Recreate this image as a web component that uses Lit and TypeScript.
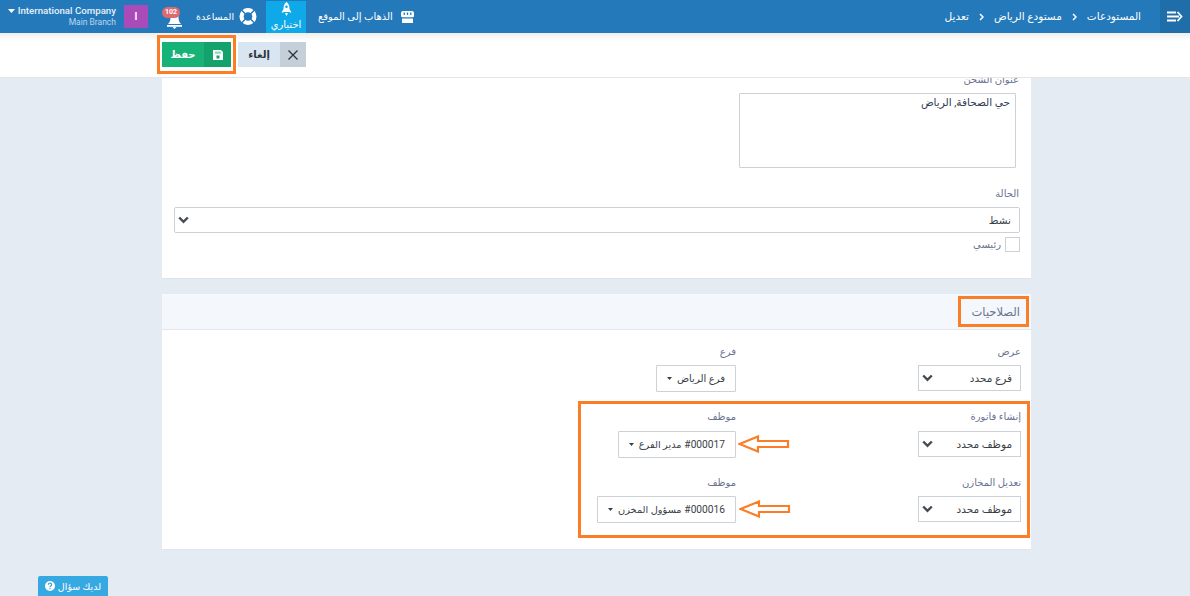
import { LitElement, html, css, svg } from "lit";
import { customElement } from "lit/decorators.js";

const caret = html`<svg class="caret" width="7" height="4" viewBox="0 0 7 4"><path d="M0 0h7L3.5 4z" fill="currentColor"/></svg>`;
const smallCaret = html`<svg class="caret" width="5" height="3" viewBox="0 0 5 3"><path d="M0 0h5L2.500 3z" fill="currentColor"/></svg>`;
const chevron = html`<svg class="chev" width="11" height="8" viewBox="0 0 11 8"><path d="M1.2 1.5 5.5 5.8 9.8 1.5" fill="none" stroke="#444b55" stroke-width="2.4"/></svg>`;
const crumbSep = html`<svg width="5" height="8" viewBox="0 0 5 8"><path d="M1 1l3 3-3 3" fill="none" stroke="#fff" stroke-width="1.5"/></svg>`;
const arrow = svg`<path d="M1.5 9 20 1.5V6H50v6H20v4.500z" fill="#fff" stroke="#fb7d25" stroke-width="2.200"/>`;

function select(text: string) {
  return html`<div class="sel"><span>${text}</span>${chevron}</div>`;
}
function drop(code: string, name: string) {
  return html`<div class="drop"><span>${code ? html`<span class="code">${code}</span> ` : ""}<span class="nm">${name}</span></span>${smallCaret}</div>`;
}

@customElement("app-root")
export class AppRoot extends LitElement {
  static styles = css`
    :host {
      display: block;
      position: relative;
      height: 596px;
      overflow: hidden;
      background: #e4ebf3;
      font-family: Roboto, "DejaVu Sans", sans-serif;
      font-size: 11px;
      color: #3a3f47;
    }
    .top {
      height: 33px;
      background: #2479bb;
      color: #fff;
      display: flex;
      justify-content: space-between;
      align-items: stretch;
      position: relative;
      z-index: 3;
    }
    .top-left { display: flex; align-items: center; padding-left: 8px; }
    .company { display: flex; gap: 2px; align-items: flex-start; width: 108px; }
    .company .caret { margin-top: 4px; color: #fff; flex: none; }
    .co-text { display: flex; flex-direction: column; align-items: flex-end; flex: 1; }
    .co-name { font-size: 9.700px; font-weight: 500; line-height: 12px; white-space: nowrap; color: #e8f1f8; }
    .co-sub { font-size: 8.500px; line-height: 11px; color: #bcd6ea; white-space: nowrap; }
    .avatar {
      width: 24px; height: 23px; margin-left: 8px; background: #a94bb8; border-radius: 1px;
      display: flex; align-items: center; justify-content: center; font-size: 10px; font-weight: 700;
    }
    .bell { position: relative; width: 20px; height: 24px; margin-left: 14px; }
    .bell svg { position: absolute; left: 5px; top: 6px; }
    .badge {
      position: absolute; left: 0; top: 2px; width: 18px; height: 11px; border-radius: 6px;
      background: #dc6a70; font-size: 7px; line-height: 11px; font-weight: 700; text-align: center;
    }
    .help { display: flex; align-items: center; gap: 5px; margin-left: 14px; font-size: 9.500px; width: 61px; justify-content: flex-end; }
    .active {
      width: 40px; height: 32px; margin-left: 9px; background: #0fa8e8;
      display: flex; flex-direction: column; align-items: center; font-size: 10px; line-height: 13px;
    }
    .active svg { margin-top: 1px; margin-bottom: 2px; }
    .goto { display: flex; align-items: center; gap: 8px; margin-left: 12px; font-size: 10px; }
    .top-right { display: flex; align-items: center; }
    .crumbs { display: flex; direction: rtl; align-items: center; gap: 10px; margin-right: 19px; font-size: 10.500px; }
    .toggle { width: 30px; height: 33px; background: #1f6da9; display: flex; align-items: center; justify-content: center; }

    .toolbar {
      height: 45px;
      background: linear-gradient(#eeeeee, #fff 8px);
      border-bottom: 1px solid #e6e6e6;
      box-sizing: border-box;
      display: flex;
      direction: rtl;
      gap: 7px;
      padding: 9px 884px 0 0;
      position: relative;
      z-index: 2;
    }
    .btn { display: flex; height: 25px; align-items: stretch; font-size: 10px; font-weight: 700; }
    .btn .ic { display: flex; align-items: center; justify-content: center; }
    .btn .tx { display: flex; align-items: center; justify-content: center; }
    .cancel .ic { width: 26px; background: #c4cfda; }
    .cancel .tx { width: 42px; background: #d9e5f1; color: #2c3138; }
    .save .ic { width: 27px; background: #13a16c; }
    .save .tx { width: 42px; background: #17b277; color: #fff; }

    main { padding-left: 162px; padding-right: 159px; direction: rtl; }
    .card { background: #fff; }
    .c1 {
      margin-top: -5px; height: 206px; box-sizing: border-box; padding: 0 11px 0 12px;
      border-bottom: 1px solid #dde3ea;
    }
    .lbl { display: block; font-size: 10px; color: #6a7390; line-height: 14px; }
    .c1 .lbl { margin-right: 1px; }
    .addr { margin-top: -1px; line-height: 14px; height: 14px; }
    .ta {
      width: 277px; height: 75px; box-sizing: border-box; border: 1px solid #cdd1d6; border-radius: 1px;
      margin: 6px 4px 0 0; padding: 2px 5px; font-size: 10.500px; line-height: 14px; color: #2f3a55;
    }
    .status { margin-top: 19px; }
    .wide {
      height: 26px; box-sizing: border-box; border: 1px solid #cdd1d6; border-radius: 2px; margin-top: 6px;
      display: flex; align-items: center; justify-content: space-between; padding: 0 8px 0 3px; font-size: 10.500px;
    }
    .chk { display: flex; align-items: center; gap: 4px; margin-top: 4px; font-size: 10px; color: #6a7390; }
    .box { width: 15px; height: 15px; box-sizing: border-box; border: 1px solid #cdd1d6; }

    .c2 { margin-top: 15px; height: 255px; border-bottom: 1px solid #e2e7ee; }
    .c2 header {
      height: 36px; box-sizing: border-box; background: #f4f7fb; border-bottom: 1px solid #e4e8ee;
      display: flex; align-items: center; padding-right: 11px; font-size: 11.500px; color: #6a7390; font-weight: 500;
    }
    .grid { display: grid; grid-template-columns: 285px 1fr; padding: 15px 10px 0 0; }
    .row { display: contents; }
    .cell { height: 65px; display: flex; flex-direction: column; align-items: flex-start; }
    .cell .lbl { margin-bottom: 6px; }
    .row:nth-child(2) .cell { height: 66px; }
    .row:nth-child(2) .lbl { margin-bottom: 7px; }
    .sel {
      width: 103px; height: 26px; box-sizing: border-box; border: 1px solid #cdd1d6;
      display: flex; align-items: center; justify-content: space-between; padding: 0 8px 0 3px; font-size: 10.500px;
    }
    .drop {
      height: 27px; box-sizing: border-box; border: 1px solid #cdd1d6; border-radius: 1px;
      display: flex; align-items: center; gap: 5px; padding: 0 10px; white-space: nowrap;
    }
    .code { font-size: 10.200px; }
    .nm { font-size: 10px; }
    .code + .nm { font-size: 9.800px; }
    .drop .caret { color: #3a3f47; flex: none; }

    .ask {
      position: absolute; left: 38px; top: 576px; width: 70px; height: 20px; background: #37a9e2;
      border-radius: 2px 2px 0 0; color: #fff; direction: rtl; font-size: 9.500px; font-weight: 500;
      display: flex; align-items: center; justify-content: center; gap: 3px;
    }
    .mark { position: absolute; border: 3px solid #fb7d25; box-sizing: border-box; z-index: 4; }
    .m1 { left: 157px; top: 35px; width: 79px; height: 39px; }
    .m2 { left: 958px; top: 296px; width: 71px; height: 31px; }
    .m3 { left: 578px; top: 401px; width: 452px; height: 137px; }
    .arr { position: absolute; z-index: 4; }
    .a1 { left: 738px; top: 435px; }
    .a2 { left: 739px; top: 500px; }
  `;

  render() {
    return html`
      <div class="top">
        <div class="top-left">
          <div class="company">
            ${caret}
            <div class="co-text"><span class="co-name">International Company</span><span class="co-sub">Main Branch</span></div>
          </div>
          <div class="avatar">I</div>
          <div class="bell">
            <svg width="15" height="18" viewBox="0 0 15 18"><path d="M7.500 0C4.500 0 3.500 3 3.500 6.500c0 3-.9 5-2.500 6.500h13c-1.600-1.500-2.500-3.500-2.500-6.500C11.500 3 10.500 0 7.500 0z" fill="#fff"/><rect x="0" y="14" width="15" height="1.800" fill="#fff"/><path d="M5.500 16h4L7.500 18z" fill="#fff"/></svg>
            <span class="badge">102</span>
          </div>
          <div class="help">
            <span dir="rtl">المساعدة</span>
            <svg width="19" height="19" viewBox="0 0 19 19"><circle cx="9.500" cy="9.500" r="6.800" fill="none" stroke="#fff" stroke-width="4.400"/><path d="M3 3l4 4M16 3l-4 4M3 16l4-4M16 16l-4-4" stroke="#2479bb" stroke-width="1.500"/></svg>
          </div>
          <div class="active">
            <svg width="11" height="14" viewBox="0 0 11 14"><path fill-rule="evenodd" d="M5.500 0C3 2 2.500 4.500 2.500 7v3h6V7c0-2.500-.5-5-3-7zM5.500 3.500a1.300 1.300 0 1 1 0 2.600 1.300 1.300 0 0 1 0-2.600zM2.500 7 .5 10.500h2zM8.500 7l2 3.500h-2zM4 11h3l-1.500 3z" fill="#fff"/></svg>
            <span dir="rtl">اختياري</span>
          </div>
          <div class="goto">
            <span dir="rtl">الذهاب إلى الموقع</span>
            <svg width="13" height="12" viewBox="0 0 13 12"><path d="M2 0h9c1 0 2 .8 2 2v3c0 .8-.7 1.200-1.500 1.200h-10C.7 6.200 0 5.800 0 5V2C0 .8 1 0 2 0z" fill="#fff"/><path d="M1 7.500h11V12H1z" fill="#fff"/><path d="M3.200 1.500v2.500M6.500 1.500v2.500M9.800 1.500v2.500" stroke="#2479bb" stroke-width="1.300"/></svg>
          </div>
        </div>
        <div class="top-right">
          <div class="crumbs">
            <span>المستودعات</span>${crumbSep}<span>مستودع الرياض</span>${crumbSep}<span>تعديل</span>
          </div>
          <div class="toggle">
            <svg width="16" height="11" viewBox="0 0 16 11"><path d="M0 1.500h9M0 5.500h12M0 9.500h9" stroke="#fff" stroke-width="1.800"/><path d="M10.500 1l4 4.500-4 4.500" fill="none" stroke="#fff" stroke-width="1.800"/></svg>
          </div>
        </div>
      </div>

      <div class="toolbar">
        <div class="btn cancel">
          <div class="ic"><svg width="10" height="10" viewBox="0 0 10 10"><path d="M.5.500l9 9M9.500.500l-9 9" stroke="#2c3138" stroke-width="1.300"/></svg></div>
          <div class="tx">إلغاء</div>
        </div>
        <div class="btn save">
          <div class="ic"><svg width="10" height="10" viewBox="0 0 10 10"><path d="M0 0h8l2 2v8H0z" fill="#fff"/><path d="M1.800 1.500h6v2.300h-6z" fill="#8fd8bb"/><rect x="3.500" y="5.500" width="3" height="3" fill="#13a16c"/></svg></div>
          <div class="tx">حفظ</div>
        </div>
      </div>

      <main>
        <section class="card c1">
          <div class="lbl addr">عنوان الشحن</div>
          <div class="ta">حي الصحافة, الرياض</div>
          <div class="lbl status">الحالة</div>
          <div class="wide"><span>نشط</span>${chevron}</div>
          <div class="chk"><span class="box"></span><span>رئيسي</span></div>
        </section>

        <section class="card c2">
          <header>الصلاحيات</header>
          <div class="grid">
            <div class="row">
              <div class="cell"><span class="lbl">عرض</span>${select("فرع محدد")}</div>
              <div class="cell"><span class="lbl">فرع</span>${drop("", "فرع الرياض")}</div>
            </div>
            <div class="row">
              <div class="cell"><span class="lbl">إنشاء فاتورة</span>${select("موظف محدد")}</div>
              <div class="cell"><span class="lbl">موظف</span>${drop("#000017", "مدير الفرع")}</div>
            </div>
            <div class="row">
              <div class="cell"><span class="lbl">تعديل المخازن</span>${select("موظف محدد")}</div>
              <div class="cell"><span class="lbl">موظف</span>${drop("#000016", "مسؤول المخزن")}</div>
            </div>
          </div>
        </section>
      </main>

      <div class="ask">
        <span>لديك سؤال</span>
        <svg width="10" height="10" viewBox="0 0 10 10"><circle cx="5" cy="5" r="5" fill="#fff"/><path d="M3.300 3.800C3.400 2.700 4.100 2.200 5 2.200c1 0 1.700.6 1.700 1.500C6.700 5 5 5 5 6.200" fill="none" stroke="#37a9e2" stroke-width="1.200"/><rect x="4.400" y="7" width="1.200" height="1.200" fill="#37a9e2"/></svg>
      </div>

      <div class="mark m1"></div>
      <div class="mark m2"></div>
      <div class="mark m3"></div>
      <svg class="arr a1" width="52" height="18" viewBox="0 0 52 18">${arrow}</svg>
      <svg class="arr a2" width="52" height="18" viewBox="0 0 52 18">${arrow}</svg>
    `;
  }
}
